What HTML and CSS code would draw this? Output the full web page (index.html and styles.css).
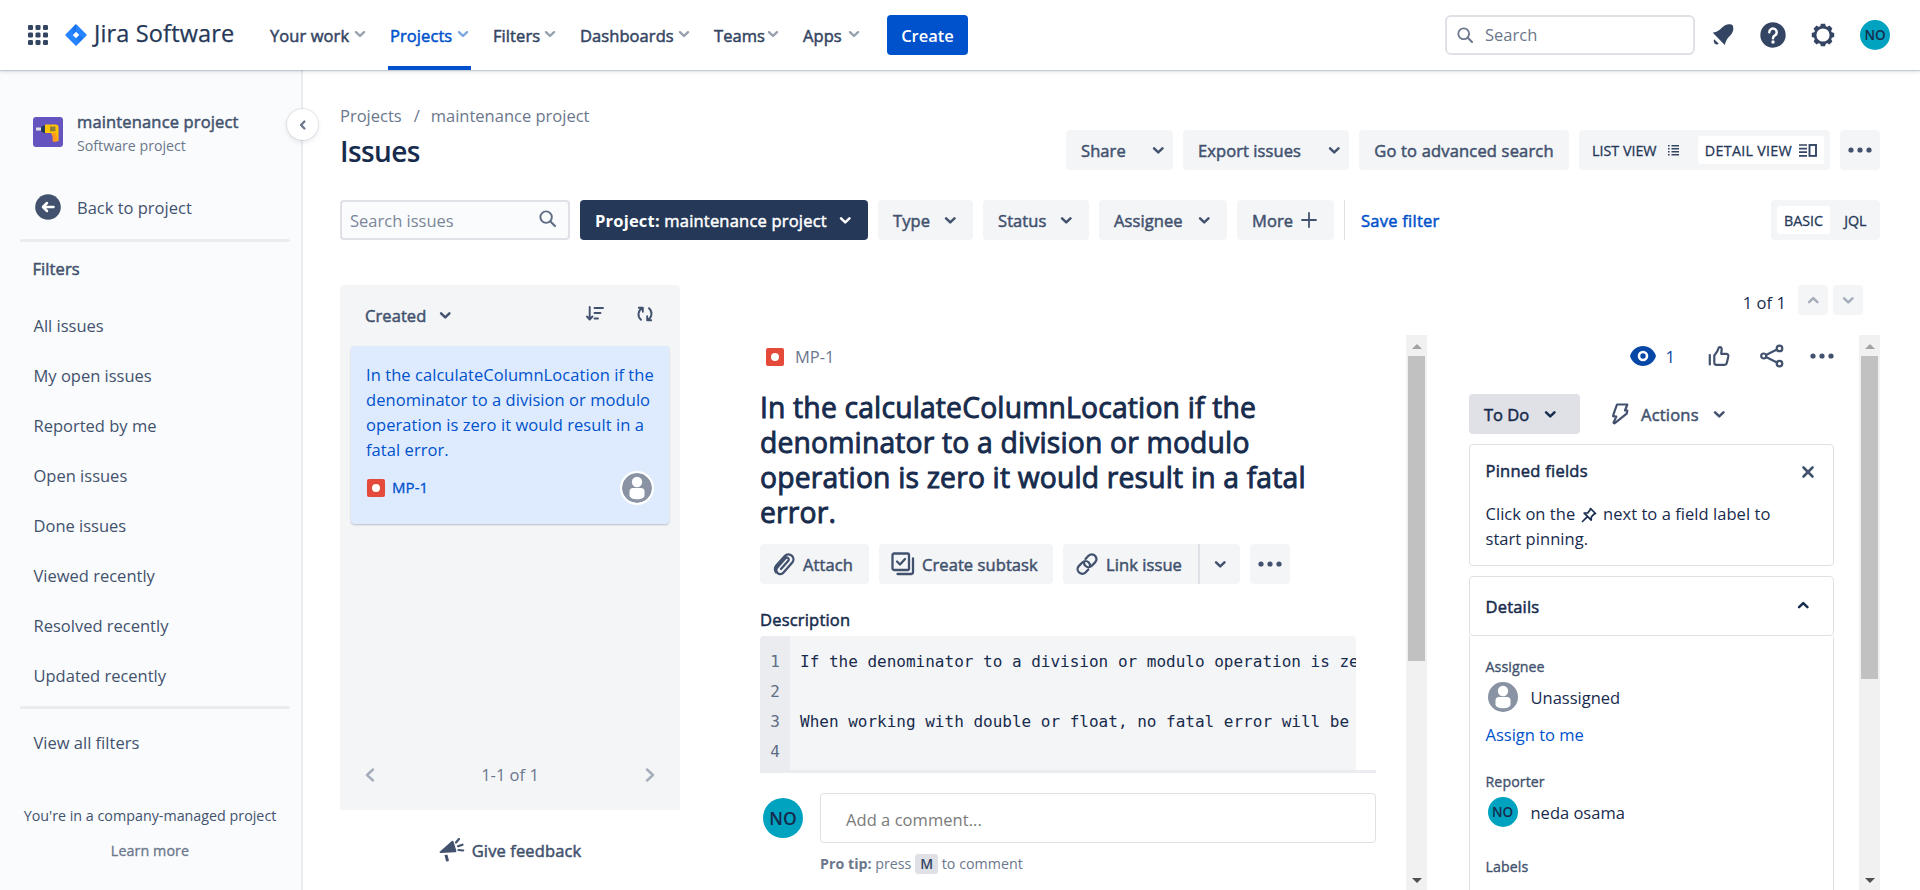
FILE: index.html
```html
<!DOCTYPE html>
<html lang="en">
<head>
<meta charset="utf-8">
<title>Issues - Jira Software</title>
<link rel="stylesheet" href="styles.css">
</head>
<body>
<svg class="sprite" width="0" height="0" aria-hidden="true">
  <symbol id="chev" viewBox="0 0 12 12"><path d="M2 4.200l4 3.800 4-3.800" fill="none" stroke="currentColor" stroke-width="2.400" stroke-linecap="round" stroke-linejoin="round"/></symbol>
  <symbol id="chev-up" viewBox="0 0 12 12"><path d="M2 7.800l4-3.800 4 3.800" fill="none" stroke="currentColor" stroke-width="2.400" stroke-linecap="round" stroke-linejoin="round"/></symbol>
  <symbol id="dots" viewBox="0 0 24 6"><circle cx="3" cy="3" r="2.600" fill="currentColor"/><circle cx="12" cy="3" r="2.600" fill="currentColor"/><circle cx="21" cy="3" r="2.600" fill="currentColor"/></symbol>
  <symbol id="search" viewBox="0 0 16 16"><circle cx="6.700" cy="6.700" r="5.400" fill="none" stroke="currentColor" stroke-width="1.800"/><path d="M10.800 10.800l4.200 4.200" stroke="currentColor" stroke-width="2" stroke-linecap="round"/></symbol>
  <symbol id="bug" viewBox="0 0 18 18"><rect width="18" height="18" rx="2" fill="#e5493a"/><circle cx="9" cy="9" r="4" fill="#fff"/></symbol>
  <symbol id="person" viewBox="0 0 30 30"><circle cx="15" cy="15" r="15" fill="#8993a4"/><circle cx="15" cy="9" r="5.200" fill="#fff"/><path d="M7.500 18.500a3.500 3.500 0 0 1 3.500-3.500h8a3.500 3.500 0 0 1 3.500 3.500v3.800c0 2.700-3.500 4-7.500 4s-7.500-1.300-7.500-4z" fill="#fff"/></symbol>
</svg>

<header class="topbar">
  <svg class="apps" viewBox="0 0 20 20" fill="#344563"><rect width="5" height="5" rx="1.300"/><rect x="7.500" width="5" height="5" rx="1.300"/><rect x="15" width="5" height="5" rx="1.300"/><rect y="7.500" width="5" height="5" rx="1.300"/><rect x="7.500" y="7.500" width="5" height="5" rx="1.300"/><rect x="15" y="7.500" width="5" height="5" rx="1.300"/><rect y="15" width="5" height="5" rx="1.300"/><rect x="7.500" y="15" width="5" height="5" rx="1.300"/><rect x="15" y="15" width="5" height="5" rx="1.300"/></svg>
  <svg class="logo" viewBox="0 0 22 22"><defs><linearGradient id="lg" x1="1" y1="0" x2="0.300" y2="0.800"><stop offset="0" stop-color="#0052cc"/><stop offset="1" stop-color="#2684ff"/></linearGradient></defs><path d="M11 0l10.300 10.300a1 1 0 0 1 0 1.400L11 22 .7 11.700a1 1 0 0 1 0-1.400zM11 7.700L7.700 11l3.300 3.300 3.300-3.300z" fill="#2684ff" fill-rule="evenodd"/><path d="M11 0v7.700L7.700 11 4.200 7.200z" fill="url(#lg)" opacity=".6"/><path d="M11 22v-7.700l3.300-3.300 3.500 3.800z" fill="url(#lg)" opacity=".6"/></svg>
  <span class="brand">Jira Software</span>
  <nav class="nav">
    <a>Your work<svg><use href="#chev"/></svg></a>
    <a class="active">Projects<svg><use href="#chev"/></svg></a>
    <a>Filters<svg><use href="#chev"/></svg></a>
    <a>Dashboards<svg><use href="#chev"/></svg></a>
    <a>Teams<svg><use href="#chev"/></svg></a>
    <a>Apps<svg><use href="#chev"/></svg></a>
  </nav>
  <button class="create">Create</button>
  <div class="global-search"><svg><use href="#search"/></svg>Search</div>
  <svg class="bell" viewBox="0 0 24 24" fill="#344563"><path d="M1.500 10.200C6 9 7.500 8.200 10.500 5.200c3.500-3.500 6.500-4 9.500-3.200 1 .3 1.600 1 1.800 1.900.8 3.200-.2 6.400-3.300 9.600-3 3-3.700 4.500-5 9z" transform="translate(.3 -.4)"/><path d="M3.200 16.200a3.300 3.300 0 0 0 4.600 4.600z"/></svg>
  <svg class="help" viewBox="0 0 26 26"><circle cx="13" cy="13" r="12.700" fill="#344563"/><path d="M9.300 10.200a3.700 3.700 0 1 1 5.600 3.200c-1.200.7-1.900 1.300-1.900 2.800" fill="none" stroke="#fff" stroke-width="2.500" stroke-linecap="round"/><circle cx="13" cy="20" r="1.700" fill="#fff"/></svg>
  <svg class="gear" viewBox="0 0 24 24"><circle cx="12" cy="12" r="7.900" fill="none" stroke="#344563" stroke-width="2.600"/><g fill="#344563"><path id="t" d="M9 4l.9-3.200h4.200L15 4z"/><use href="#t" transform="rotate(45 12 12)"/><use href="#t" transform="rotate(90 12 12)"/><use href="#t" transform="rotate(135 12 12)"/><use href="#t" transform="rotate(180 12 12)"/><use href="#t" transform="rotate(225 12 12)"/><use href="#t" transform="rotate(270 12 12)"/><use href="#t" transform="rotate(315 12 12)"/></g></svg>
  <span class="initials">NO</span>
</header>

<div class="layout">
  <aside class="sidebar">
    <div class="project">
      <svg viewBox="0 0 30 30"><rect width="30" height="30" rx="3" fill="#6554c0"/><path d="M3 10.500h5.500v3H3z" fill="#dfe1e6"/><path d="M8 10l4-2v8.500L8 14.500z" fill="#253858"/><path d="M12 7.500h10.500a3 3 0 0 1 3 3v13.500l-3 .5-3.500-8.500h-7z" fill="#ffc400"/><path d="M18 16h4.500c1.500 2.500 2.500 5 1.800 7.500-.6 1.700-3.500 1.900-4.500.5-.8-1.500.2-3-.3-4.500z" fill="#ff991f"/><path d="M17 9.500h5.500v4.800H17z" fill="#8f7e3a"/></svg>
      <div><div class="project-name">maintenance project</div><div class="project-type">Software project</div></div>
    </div>
    <a class="back"><svg viewBox="0 0 26 26"><circle cx="13" cy="13" r="12.800" fill="#42526e"/><path d="M18.500 13H8.500M12 9l-4 4 4 4" fill="none" stroke="#fff" stroke-width="2.500" stroke-linecap="round" stroke-linejoin="round"/></svg>Back to project</a>
    <hr>
    <h2>Filters</h2>
    <ul>
      <li>All issues</li><li>My open issues</li><li>Reported by me</li><li>Open issues</li><li>Done issues</li><li>Viewed recently</li><li>Resolved recently</li><li>Updated recently</li>
    </ul>
    <hr class="thin">
    <a class="view-all">View all filters</a>
    <footer><p>You're in a company-managed project</p><p class="learn">Learn more</p></footer>
    <button class="collapse"><svg viewBox="0 0 12 12"><path d="M7.200 3L4.300 6l2.900 3" fill="none" stroke="#6b778c" stroke-width="2" stroke-linecap="round" stroke-linejoin="round"/></svg></button>
  </aside>

  <main class="content">
    <div class="crumbs"><span>Projects</span><span class="slash">/</span><span>maintenance project</span></div>
    <div class="title-row">
      <h1>Issues</h1>
      <div class="actions">
        <button class="btn b-share">Share<svg class="ch"><use href="#chev"/></svg></button>
        <button class="btn b-export">Export issues<svg class="ch"><use href="#chev"/></svg></button>
        <button class="btn b-adv">Go to advanced search</button>
        <div class="toggle views"><span class="opt">LIST VIEW<svg class="list-ic" viewBox="0 0 11 11" fill="#344563"><path d="M0 0h1.600v1.500H0zM3.500 0H11v1.500H3.500zM0 3h1.600v1.500H0zM3.500 3H11v1.500H3.500zM0 6h1.600v1.500H0zM3.500 6H11v1.500H3.500zM0 9h1.600v1.500H0zM3.500 9H11v1.500H3.500z"/></svg></span><span class="opt on">DETAIL VIEW<svg class="detail-ic" viewBox="0 0 18 13"><path d="M0 1h8M0 4.600h8M0 8.200h8M0 11.800h8" stroke="#344563" stroke-width="1.700"/><rect x="10.500" y="1" width="6.500" height="10.900" fill="none" stroke="#344563" stroke-width="1.900"/></svg></span></div>
        <button class="btn b-dots"><svg class="dots"><use href="#dots"/></svg></button>
      </div>
    </div>
    <div class="filter-row">
      <div class="issue-search"><span>Search issues</span><svg><use href="#search"/></svg></div>
      <button class="btn b-project"><span><b>Project:</b> maintenance project</span><svg class="ch"><use href="#chev"/></svg></button>
      <button class="btn b-type">Type<svg class="ch"><use href="#chev"/></svg></button>
      <button class="btn b-status">Status<svg class="ch"><use href="#chev"/></svg></button>
      <button class="btn b-assignee">Assignee<svg class="ch"><use href="#chev"/></svg></button>
      <button class="btn b-more">More<svg class="plus" viewBox="0 0 16 16"><path d="M8 1v14M1 8h14" stroke="currentColor" stroke-width="1.800" stroke-linecap="round"/></svg></button>
      <a class="save">Save filter</a>
      <div class="toggle modes"><span class="opt on">BASIC</span><span class="opt">JQL</span></div>
    </div>

    <div class="workspace">
      <section class="list-col">
        <div class="list">
          <div class="list-head"><span>Created</span><svg class="ch"><use href="#chev"/></svg>
            <svg class="sort" viewBox="0 0 18 16" fill="none" stroke="#42526e" stroke-width="1.900"><path d="M3.700 1v12M1 10.500l2.700 3 2.700-3M8.500 2H17M8.500 7h6M8.500 12.500h3.500" stroke-linecap="round" stroke-linejoin="round"/></svg>
            <svg class="refresh" viewBox="0 0 16 16" fill="none" stroke="#42526e" stroke-width="1.900" stroke-linecap="round" stroke-linejoin="round"><path d="M1.800 1.700h4v4M5.300 2.200C.8 4.500.2 10.500 4 13.800M14.200 14.300h-4v-4M10.700 13.800C15.200 11.500 15.800 5.500 12 2.200"/></svg>
          </div>
          <article class="card">
            <p>In the calculateColumnLocation if the<br>denominator to a division or modulo<br>operation is zero it would result in a<br>fatal error.</p>
            <div class="card-foot"><svg class="bug"><use href="#bug"/></svg><span>MP-1</span><svg class="person ring"><use href="#person"/></svg></div>
          </article>
          <div class="pager"><svg viewBox="0 0 10 14"><path d="M8 1.500L2 7l6 5.500"/></svg><span>1-1 of 1</span><svg viewBox="0 0 10 14"><path d="M2 1.500L8 7l-6 5.500"/></svg></div>
        </div>
        <a class="feedback"><svg viewBox="0 0 26 26" fill="#42526e"><path d="M1 14.500L12.500 4.200c.8-.7 1.800-.4 2.100.6l2.700 8.600c.3 1-.2 1.900-1.300 1.900L1.800 16C.4 16 .2 15.200 1 14.500z"/><path d="M5.500 18l3-.2 1.500 6-2 .7c-.5.100-.9 0-1-.6z"/><path d="M17 5.500l3-3.500M19 9.200l4.500-1.500M19.500 13l4.700.5" stroke="#42526e" stroke-width="2.200" stroke-linecap="round"/></svg>Give feedback</a>
      </section>

      <section class="detail">
        <div class="key"><svg class="bug"><use href="#bug"/></svg>MP-1</div>
        <h2 class="issue-title">In the calculateColumnLocation if the<br>denominator to a division or modulo<br>operation is zero it would result in a fatal<br>error.</h2>
        <div class="tools">
          <button class="btn t-attach"><svg viewBox="0 0 24 24"><path d="M9 16.500l7.300-8.300a1.900 1.900 0 0 0-2.900-2.500L5.300 15a4 4 0 0 0 6 5.300l9-10.200a5 5 0 0 0-7.500-6.600L4.500 12.800a6 6 0 0 0-.5 7" transform="translate(0 .5)"/></svg>Attach</button>
          <button class="btn t-sub"><svg viewBox="0 0 24 24"><rect x="1.500" y="1.500" width="16.500" height="16.500" rx="1.500"/><path d="M6 9.500l3 3 5-5.500M22 6.500V20a2 2 0 0 1-2 2H6.500"/></svg>Create subtask</button>
          <div class="split"><button class="btn t-link"><svg viewBox="0 0 24 24"><path d="M13.300 17.500l-2.800 3a4.600 4.600 0 0 1-6.600-.2 4.600 4.600 0 0 1 .1-6.500l3.300-3.300a4.600 4.600 0 0 1 6.500 0c1 1 1.400 2.300 1.200 3.600M10.500 7l3-3.200a4.600 4.600 0 0 1 6.600 0 4.600 4.600 0 0 1 0 6.600L16.800 13.800a4.600 4.600 0 0 1-6.500 0c-.9-.9-1.300-2-1.200-3.200"/></svg>Link issue</button><button class="btn t-drop"><svg class="ch"><use href="#chev"/></svg></button></div>
          <button class="btn b-dots"><svg class="dots"><use href="#dots"/></svg></button>
        </div>
        <h3>Description</h3>
        <div class="code-wrap"><div class="code"><pre class="nums">1
2
3
4</pre><pre class="src">If the denominator to a division or modulo operation is ze

When working with double or float, no fatal error will be
</pre></div></div>
        <div class="comment"><span class="initials big">NO</span><div class="comment-box">Add a comment...</div></div>
        <div class="tip"><b>Pro tip:</b> press <kbd>M</kbd> to comment</div>
      </section>

      <div class="scroll s1"><i class="up"></i><i class="thumb"></i><i class="down"></i></div>

      <section class="side">
        <div class="count"><span>1 of 1</span><button class="btn"><svg class="ch"><use href="#chev-up"/></svg></button><button class="btn"><svg class="ch"><use href="#chev"/></svg></button></div>
        <div class="side-icons">
          <svg class="eye" viewBox="0 0 26 20"><path d="M13 0c6 0 10.500 4 12.500 8.500a3.500 3.500 0 0 1 0 3C23.500 16 19 20 13 20S2.500 16 .5 11.500a3.500 3.500 0 0 1 0-3C2.500 4 7 0 13 0z" fill="#0747a6"/><circle cx="13" cy="10" r="4" fill="none" stroke="#fff" stroke-width="2.600"/></svg>
          <span>1</span>
          <svg class="thumb-ic" viewBox="0 0 22 22"><path d="M1.800 10v9.500M6.300 10.500v7.300a2 2 0 0 0 2 2h8.200c1.200 0 2-.6 2.300-1.800l1.500-6.500c.3-1.500-.5-2.700-2-2.700h-5.100l.5-4.300c.1-1.200-.6-2.300-1.700-2.300s-1.500.6-1.700 1.500C9.700 6.500 8.500 8 6.300 10.500z"/></svg>
          <svg class="share-ic" viewBox="0 0 24 24"><circle cx="3.700" cy="12" r="2.500"/><circle cx="19.500" cy="4.400" r="2.800"/><circle cx="19.500" cy="19.600" r="2.800"/><path d="M6 10.900l11-5.300M6 13.100l11 5.300"/></svg>
          <svg class="dots"><use href="#dots"/></svg>
        </div>
        <div class="status-row">
          <button class="todo">To Do<svg class="ch"><use href="#chev"/></svg></button>
          <svg class="bolt" viewBox="0 0 18 22"><path d="M6 1.500h10.300l-2.300 6h2.300l-.6 3.200L3.500 20.300l-1-.5 2.800-6.200-3.300-.4L3 9.800z"/></svg>
          <span>Actions</span><svg class="ch"><use href="#chev"/></svg>
        </div>
        <div class="pinned">
          <div class="pin-head">Pinned fields<svg viewBox="0 0 14 14"><path d="M2.500 2.500l9 9M11.500 2.500l-9 9" stroke="#42526e" stroke-width="2.600" stroke-linecap="round"/></svg></div>
          <p>Click on the <svg class="pin" viewBox="0 0 16 16"><path d="M9.500 1.500l5 5-1.500.6-2.600 2.700-.2 3.400-7-7 3.500-.2L9 3zM6.200 9.800L1.500 14.500"/></svg> next to a field label to<br>start pinning.</p>
        </div>
        <div class="details-head">Details<svg class="ch"><use href="#chev-up"/></svg></div>
        <div class="details">
          <label>Assignee</label>
          <div class="who"><svg class="person"><use href="#person"/></svg>Unassigned</div>
          <a>Assign to me</a>
          <label>Reporter</label>
          <div class="who"><span class="initials">NO</span>neda osama</div>
          <label class="labels">Labels</label>
        </div>
      </section>

      <div class="scroll s2"><i class="up"></i><i class="thumb"></i><i class="down"></i></div>
    </div>
  </main>
</div>
</body>
</html>
```

FILE: styles.css
```css
* { box-sizing: border-box; }
body {
  margin: 0;
  width: 1920px;
  height: 890px;
  overflow: hidden;
  background: #fff;
  color: #172b4d;
  font: 400 16.5px/25px "Open Sans", "Noto Sans", sans-serif;
  white-space: nowrap;
}
h1, h2, h3, p, ul, pre { margin: 0; padding: 0; }
ul { list-style: none; }
svg { display: block; flex: none; }
.sprite { position: absolute; }
button { border: 0; padding: 0; font: inherit; color: inherit; }
.ch { width: 12.500px; height: 12.500px; }
.dots { width: 24px; height: 6px; color: #42526e; }
.bug { width: 18px; height: 18px; }
.person { width: 30px; height: 30px; }

/* Medium weight: thickened regular */
.nav, .project-name, .sidebar h2, .learn, .btn, .save, .list-head, .card-foot,
.feedback, .tools, h3, .status-row, .pin-head, .details-head, .details label {
  -webkit-text-stroke: .5px currentColor;
  letter-spacing: .08px;
}
.btn b { -webkit-text-stroke: 0; }

/* Top bar */
.topbar {
  position: relative;
  z-index: 2;
  display: flex;
  align-items: center;
  height: 70px;
  padding-left: 28px;
  background: #fff;
  box-shadow: 0 1px 1px rgba(9, 30, 66, .15), 0 2px 4px rgba(9, 30, 66, .12);
}
.apps { width: 20px; height: 20px; }
.logo { width: 22px; height: 22px; margin-left: 17px; }
.brand { width: 170px; margin: -3px 0 0 7px; font-size: 23.5px; letter-spacing: .15px; color: #253858; -webkit-text-stroke: .25px currentColor; }
.nav {
  display: grid;
  grid-template-columns: 120px 103px 87px 134px 89px 83px;
  height: 70px;
  margin-left: 6px;
  margin-right: 1px;
  color: #344563;
}
.nav a { display: flex; align-items: center; justify-content: space-between; padding-right: 24px; }
.nav a:last-child { padding-right: 26px; }
.nav svg { width: 12px; height: 12px; opacity: .5; margin-top: -2px; }
.nav .active { color: #0052cc; box-shadow: inset 0 -4px #0052cc; margin: 0 22px 0 -2px; padding: 0 2px; }
.create {
  width: 81px;
  height: 40px;
  border-radius: 4px;
  background: #0052cc;
  color: #fff;
  font-weight: 600;
}
.global-search {
  display: flex;
  align-items: center;
  width: 250px;
  height: 40px;
  margin-left: 477px;
  padding: 0 0 1px 10px;
  border: 2px solid #dfe1e6;
  border-radius: 6px;
  color: #6b778c;
}
.global-search svg { width: 16px; height: 16px; margin-right: 12px; }
.bell { width: 24px; height: 24px; margin-left: 16px; }
.help { width: 26px; height: 26px; margin-left: 25px; }
.gear { width: 24px; height: 24px; margin-left: 25px; }
.initials {
  display: block;
  width: 30px;
  height: 30px;
  border-radius: 50%;
  background: #00a3bf;
  color: #172b4d;
  font-size: 13.5px;
  font-weight: 600;
  line-height: 30px;
  text-align: center;
}
.topbar .initials { margin-left: 25px; }
.initials.big { width: 40px; height: 40px; font-size: 17.5px; line-height: 40px; }

.layout { display: flex; height: 820px; }

/* Sidebar */
.sidebar {
  position: relative;
  width: 303px;
  flex: none;
  padding: 39px 12px 0 20px;
  background: #fafbfc;
  border-right: 2px solid #ebecf0;
  color: #42526e;
}
.project { display: flex; padding-left: 13px; height: 50px; }
.project svg { width: 30px; height: 30px; margin: 8px 14px 0 0; }
.project-name { line-height: 25px; margin-bottom: 2px; letter-spacing: .15px; }
.project-type { font-size: 14.200px; line-height: 20px; color: #6b778c; }
.back { display: flex; align-items: center; height: 26px; margin: 35px 0 19px 15px; }
.back svg { width: 26px; height: 26px; margin-right: 16px; }
hr { height: 3px; margin: 0; width: 270px; border: 0; border-radius: 2px; background: #ebecf0; }
.sidebar h2 { margin: 14px 0 20px 12.500px; font-size: 16.500px; line-height: 25px; font-weight: 400; }
.sidebar li { height: 50px; line-height: 50px; padding-left: 13.500px; }
.thin { height: 3px; margin-top: 5px; }
.view-all { display: block; margin: 21px 0 0 13.500px; }
footer { width: 260px; margin-top: 48px; text-align: center; font-size: 14.300px; }
.learn { margin-top: 10px; color: #6b778c; -webkit-text-stroke-width: .3px; }
.collapse {
  position: absolute;
  left: 287px;
  top: 39px;
  width: 31px;
  height: 31px;
  border-radius: 50%;
  background: #fff;
  box-shadow: 0 0 0 1px rgba(9, 30, 66, .08), 0 2px 4px 1px rgba(9, 30, 66, .08);
  display: flex;
  align-items: center;
  justify-content: center;
}
.collapse svg { width: 14px; height: 14px; }

/* Page header */
.content { width: 1577px; padding: 33px 0 0 37px; }
.crumbs { display: flex; line-height: 26px; color: #6b778c; }
.slash { margin: 0 11px 0 12px; }
.title-row { display: flex; justify-content: space-between; height: 56px; }
h1 { font-size: 28px; line-height: 44px; font-weight: 600; letter-spacing: -.6px; }
.actions { display: flex; gap: 10px; }
.btn {
  display: flex;
  align-items: center;
  justify-content: space-between;
  height: 40px;
  padding: 0 17px 0 15px;
  border-radius: 4px;
  background: #f4f5f7;
  color: #42526e;
}
.title-row .btn { margin-top: 1px; }
.b-share { width: 107px; padding-right: 9px; }
.b-export { width: 166px; padding-right: 9px; }
.b-adv { width: 210px; padding: 0; justify-content: center; letter-spacing: .18px; }
.btn.b-dots { width: 40px; padding: 0; justify-content: center; }
.toggle { display: flex; align-items: center; height: 40px; padding: 6px; border-radius: 4px; background: #f4f5f7; font-size: 14.300px; color: #253858; -webkit-text-stroke: .3px currentColor; }
.title-row .toggle { margin-top: 1px; }
.opt { display: flex; align-items: center; height: 28px; padding: 0 7px; border-radius: 3px; }
.on { background: #fff; }
.views { width: 251px; justify-content: space-between; }
.views .on { letter-spacing: .28px; }
.list-ic { width: 11px; height: 11px; margin-left: 11px; margin-top: 1px; }
.detail-ic { width: 18px; height: 13px; margin-left: 7px; }

.filter-row { display: flex; gap: 10px; margin-top: 15px; }
.issue-search { display: flex; align-items: center; justify-content: space-between; width: 230px; height: 40px; padding: 1px 12px 0 8px; border: 2px solid #dfe1e6; border-radius: 4px; background: #fafbfc; color: #7a869a; }
.issue-search svg { width: 17px; height: 17px; color: #5e6c84; margin-top: -4px; }
.b-project { width: 288px; background: #253858; color: #fff; letter-spacing: .2px; }
.b-type { width: 95px; }
.b-status { width: 106px; }
.b-assignee { width: 128px; }
.b-more { width: 97px; }
.plus { width: 16px; height: 16px; }
.save { border-left: 1px solid #dfe1e6; padding-left: 16px; line-height: 41px; height: 40px; color: #0052cc; letter-spacing: .25px; }
.modes { width: 109px; margin-left: auto; gap: 7px; }

/* Workspace */
.workspace { display: flex; height: 605px; margin-top: 45px; }
.list-col { width: 340px; }
.list { display: flex; flex-direction: column; height: 525px; padding: 0 10px; background: #f4f5f7; border-radius: 4px 4px 0 0; }
.list-head { display: flex; align-items: center; height: 60px; padding: 0 17px 0 15px; color: #42526e; }
.list-head .ch { margin-left: 13px; }
.sort { width: 18px; height: 16px; margin-left: auto; margin-top: -3px; }
.refresh { width: 16px; height: 16px; margin: -3px 0 0 33px; }
.card { height: 178px; margin: 1px 1px 0; padding: 16px 15px 0; border-radius: 4px; background: #deebff; box-shadow: 0 1px 2px rgba(9, 30, 66, .25); color: #0052cc; letter-spacing: .06px; }
.card-foot { display: flex; align-items: center; height: 34px; margin-top: 9px; font-size: 15px; -webkit-text-stroke-width: .3px; }
.card-foot .bug { margin-left: 1px; }
.card-foot span { margin: -1px auto 0 7px; }
.ring { border-radius: 50%; background: #fff; border: 2px solid #fff; width: 34px; height: 34px; }
.pager { display: flex; align-items: center; justify-content: space-between; margin: auto 15px 22px; line-height: 26px; color: #6b778c; }
.pager svg { width: 10px; height: 14px; fill: none; stroke: #a5adba; stroke-width: 2.400; stroke-linecap: round; stroke-linejoin: round; }
.feedback { display: flex; align-items: center; justify-content: center; gap: 7px; margin-top: 27px; color: #42526e; letter-spacing: .12px; }
.feedback svg { width: 26px; height: 26px; }

.detail { width: 616px; margin: 50px 0 0 80px; }
.key { display: flex; align-items: center; height: 44px; padding-left: 6px; gap: 11px; line-height: 24px; color: #6b778c; }
.issue-title { margin-top: 11px; font-size: 28.300px; line-height: 35px; font-weight: 400; letter-spacing: .17px; -webkit-text-stroke: .9px currentColor; }
.tools { display: flex; gap: 10px; margin-top: 14px; }
.tools .btn { padding: 0; justify-content: flex-start; }
.tools .btn svg:not(.ch):not(.dots) { width: 24px; height: 24px; margin: 0 7px 0 12px; fill: none; stroke: #42526e; stroke-width: 2.300; stroke-linecap: round; stroke-linejoin: round; }
.t-attach { width: 109px; }
.t-sub { width: 174px; }
.split { display: flex; gap: 2px; background: linear-gradient(#dfe1e6, #dfe1e6) 135px 0 / 2px 40px no-repeat; }
.t-link { width: 135px; border-radius: 4px 0 0 4px; }
.tools .t-drop { width: 40px; justify-content: center; border-radius: 0 4px 4px 0; }
.tools .b-dots { justify-content: center; }
h3 { margin: 23px 0 4px; font-size: 16.500px; line-height: 25px; font-weight: 400; letter-spacing: .2px; }
.code-wrap { width: 616px; height: 137px; border-bottom: 3px solid #ebecf0; }
.code { display: flex; width: 596px; height: 137px; border-radius: 4px 4px 0 0; background: linear-gradient(90deg, #ebecf0 30px, #f4f5f7 30px) 0 0 / 100% 134px no-repeat; overflow: hidden; }
pre { font: 400 16px/30px "DejaVu Sans Mono", monospace; padding-top: 11px; }
.nums { width: 30px; flex: none; text-align: center; color: #5e6c84; }
.src { padding-left: 10px; }
.comment { display: flex; align-items: center; margin: 20px 0 0 3px; }
.comment-box { width: 556px; height: 50px; margin-left: 17px; padding: 2px 0 0 25px; border: 1px solid #dfe1e6; border-radius: 4px; line-height: 48px; color: #7a7a7a; letter-spacing: .05px; }
.tip { margin: 8px 0 0 60px; font-size: 14.250px; color: #6b778c; }
kbd { display: inline-block; width: 23px; height: 20px; border-radius: 3px; background: #dfe1e6; color: #344563; font: 600 14px/20px "Open Sans", sans-serif; text-align: center; }

.scroll { display: flex; flex-direction: column; align-items: center; width: 21px; height: 555px; margin-top: 50px; background: #f1f1f1; }
.s1 { margin-left: 30px; }
.s2 { margin-left: 25px; }
.thumb { width: 17px; background: #c1c1c1; }
.s1 .thumb { height: 305px; }
.s2 .thumb { height: 323px; }
.up { margin: 9px 0 7px; border: 5px solid transparent; border-top: 0; border-bottom: 5px solid #a3a3a3; }
.down { margin: auto 0 7px; border: 5px solid transparent; border-bottom: 0; border-top: 5px solid #505050; }

/* Right column */
.side { width: 365px; margin-left: 42px; }
.count { display: flex; align-items: center; justify-content: flex-end; height: 30px; margin-right: -29px; }
.count span { margin: 4px 12px 0 0; letter-spacing: .05px; }
.count .btn { width: 30px; height: 30px; padding: 0; justify-content: center; color: #a5adba; }
.count .btn + .btn { margin-left: 5px; }
.side-icons { display: flex; align-items: center; justify-content: flex-end; height: 40px; margin-top: 21px; color: #0747a6; }
.eye { width: 26px; height: 20px; }
.side-icons span { margin: 0 33px 0 10px; }
.thumb-ic { width: 22px; height: 22px; fill: none; stroke: #42526e; stroke-width: 2.200; stroke-linecap: round; stroke-linejoin: round; }
.share-ic { width: 24px; height: 24px; margin: 0 26px 0 30px; fill: none; stroke: #42526e; stroke-width: 2.200; }
.status-row { display: flex; align-items: center; margin-top: 18px; color: #42526e; }
.todo { display: flex; align-items: center; justify-content: space-between; width: 111px; height: 40px; padding: 0 24px 0 15px; border-radius: 4px; background: #dfe1e6; color: #172b4d; -webkit-text-stroke: .5px currentColor; }
.bolt { width: 18px; height: 22px; margin: 0 12px 0 31px; fill: none; stroke: #42526e; stroke-width: 2.200; stroke-linejoin: round; }
.status-row > span { letter-spacing: .2px; }
.status-row > .ch { margin-left: 14px; }
.pinned { height: 122px; margin-top: 10px; padding: 13px 16px 0 15.500px; border: 1px solid #dfe1e6; border-radius: 4px; }
.pin-head { display: flex; justify-content: space-between; align-items: center; height: 25px; padding-right: 2px; letter-spacing: .25px; }
.pin-head svg { width: 14px; height: 14px; margin-top: 2px; }
.pinned p { margin-top: 18px; letter-spacing: .05px; }
.pin { display: inline-block; width: 16px; height: 16px; margin: 0 1.500px; vertical-align: -3px; fill: none; stroke: #172b4d; stroke-width: 1.700; stroke-linejoin: round; stroke-linecap: round; }
.details-head { display: flex; justify-content: space-between; align-items: center; height: 60px; margin-top: 10px; padding: 1px 24px 0 15.500px; border: 1px solid #dfe1e6; border-radius: 4px; letter-spacing: .2px; }
.details-head .ch { margin-top: -3px; }
.details { height: 254px; padding: 19px 16px 0 15.500px; border: 1px solid #dfe1e6; border-width: 0 1px; }
.details label { display: block; font-size: 14.200px; line-height: 24px; color: #42526e; -webkit-text-stroke-width: .35px; }
.who { display: flex; align-items: center; gap: 13px; height: 30px; margin: 3px 0 0 2px; line-height: 33px; }
.details a { display: block; margin: 10px 0 23px; color: #0052cc; }
.details .labels { margin-top: 28px; }
```
